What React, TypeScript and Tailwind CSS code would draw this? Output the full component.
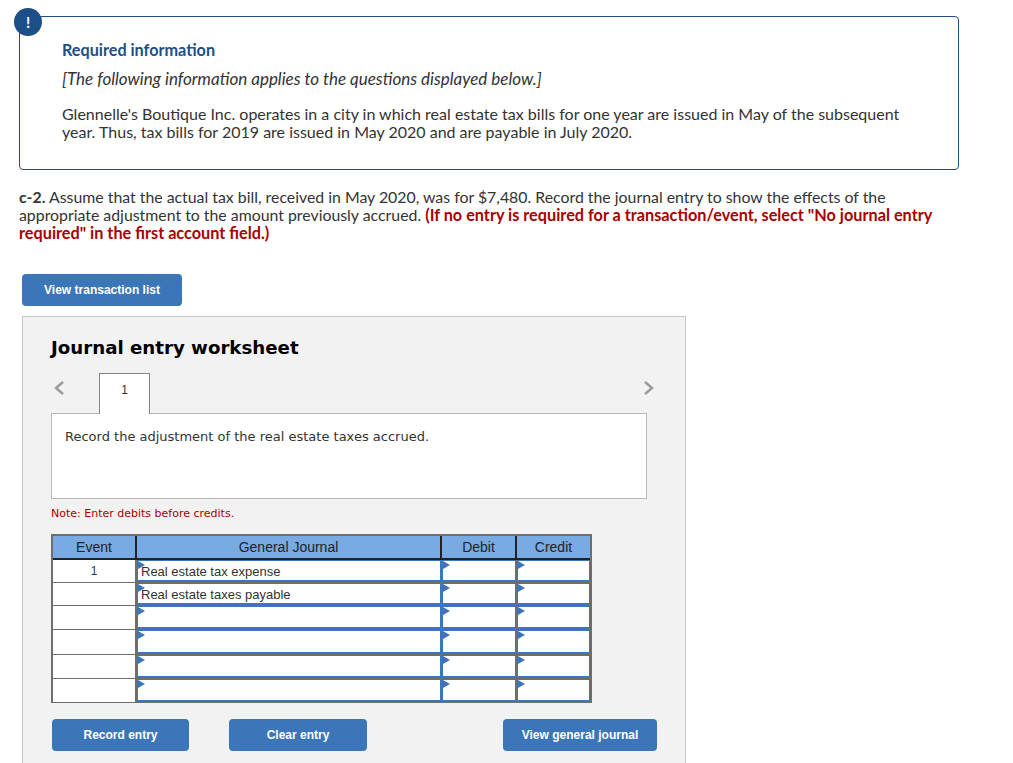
const body = "font-['Lato','Open_Sans',sans-serif]";
const arial = "font-['Liberation_Sans',Arial,sans-serif]";
const dejavu = "font-['DejaVu_Sans',Verdana,sans-serif]";

function Flag() {
  return (
    <svg className="absolute left-0 top-0" width="7" height="8" viewBox="0 0 7 8">
      <path d="M0 0L7 4L0 8Z" fill="#3b76b8" />
    </svg>
  );
}

function EntryCell({ width, text }: { width: string; text?: string }) {
  return (
    <div className={`${width} h-full shrink-0 border-r border-[#6e6e6e] last:border-r-0`}>
      <div className={`relative h-full border border-b-2 border-[#3b76b8] bg-white pl-[3px] text-[13px] leading-[21px] text-[#333] ${arial}`}>
        <Flag />
        {text}
      </div>
    </div>
  );
}

function Row({ height, event, account }: { height: string; event?: string; account?: string }) {
  return (
    <div className={`flex ${height} border-b border-[#6e6e6e]`}>
      <div className={`w-[84px] shrink-0 border-r-2 border-[#6e6e6e] bg-white text-center text-[12px] leading-[23px] text-[#333] ${arial}`}>
        {event}
      </div>
      <EntryCell width="w-[305px]" text={account} />
      <EntryCell width="w-[75px]" />
      <EntryCell width="w-[73px]" />
    </div>
  );
}

function ActionButton({ label, width }: { label: string; width: string }) {
  return (
    <button className={`${width} h-8 rounded-sm bg-[#3b76b8] text-[12px] font-bold text-white ${arial}`}>
      {label}
    </button>
  );
}

export default function App() {
  return (
    <div className={`h-[763px] w-[1013px] overflow-hidden bg-white pl-[19px] pt-4 ${body}`}>
      <div className="relative h-[154px] w-[940px] rounded border border-[#1c4f87] pl-[42px] pt-[23px] text-[16px] text-[#333]">
        <div className="absolute -left-[6px] -top-[9px] flex h-7 w-7 items-center justify-center rounded-full bg-[#1c4f87] text-[15px] font-bold text-white">
          !
        </div>
        <h2 className="text-[16.2px] leading-[20px] font-bold text-[#1c4f87]">Required information</h2>
        <p className="mt-[9px] text-[17px] leading-[20px] italic">[The following information applies to the questions displayed below.]</p>
        <p className="mt-[16px] w-[860px] leading-[18px]">
          Glennelle's Boutique Inc. operates in a city in which real estate tax bills for one year are issued in May of the subsequent year. Thus, tax bills for 2019 are issued in May 2020 and are payable in July 2020.
        </p>
      </div>

      <p className="mt-[18px] w-[920px] text-[15.85px] leading-[18px] text-[#333]">
        <b>c-2.</b> Assume that the actual tax bill, received in May 2020, was for $7,480. Record the journal entry to show the effects of the appropriate adjustment to the amount previously accrued.{" "}
        <b className="text-[16.25px] text-[#a80000]">(If no entry is required for a transaction/event, select "No journal entry required" in the first account field.)</b>
      </p>

      <button className={`ml-[3px] mt-[32px] block h-8 w-40 rounded-sm bg-[#3b76b8] text-[12px] font-bold text-white ${arial}`}>
        View transaction list
      </button>

      <div className="ml-[3px] mt-[10px] h-[460px] w-[664px] border border-[#c8c8c8] bg-[#f2f2f2] pl-7 pt-[19px]">
        <h1 className={`text-[18.2px] leading-6 font-bold text-black ${dejavu}`}>Journal entry worksheet</h1>

        <div className="relative z-10 mt-[13px] flex h-[40px] w-[596px] items-start justify-between">
          <svg className="mt-[7px] ml-[2px]" width="12" height="16" viewBox="0 0 12 16" fill="none" stroke="#9a9a9a" strokeWidth="2.4">
            <path d="M10 2L3 8L10 14" />
          </svg>
          <div className={`absolute left-[48px] top-0 h-[41px] w-[51px] border-x border-t border-[#858585] bg-white pt-[7px] text-center text-[12px] text-[#333] ${arial}`}>
            1
          </div>
          <svg className="mt-[7px] mr-[-8px]" width="12" height="16" viewBox="0 0 12 16" fill="none" stroke="#9a9a9a" strokeWidth="2.4">
            <path d="M2 2L9 8L2 14" />
          </svg>
        </div>

        <div className={`h-[86px] w-[596px] border border-[#b9b9b9] bg-white pl-[13px] pt-[14px] text-[13px] leading-[17px] text-[#333] ${dejavu}`}>
          Record the adjustment of the real estate taxes accrued.
        </div>

        <p className={`mt-[8px] text-[11px] leading-[14px] text-[#a80000] ${dejavu}`}>Note: Enter debits before credits.</p>

        <div className="mt-[13px] w-[541px] border-x-2 border-t-2 border-[#6e6e6e]">
          <div className={`flex h-[24px] border-b-2 border-[#222] bg-[#78abe3] text-center text-[14px] leading-[22px] text-[#222] ${arial}`}>
            <div className="w-[84px] shrink-0 border-r-2 border-[#222]">Event</div>
            <div className="w-[305px] shrink-0 border-r-2 border-[#222]">General Journal</div>
            <div className="w-[75px] shrink-0 border-r-2 border-[#222]">Debit</div>
            <div className="w-[73px] shrink-0">Credit</div>
          </div>
          <Row height="h-[23px]" event="1" account="Real estate tax expense" />
          <Row height="h-[23px]" account="Real estate taxes payable" />
          <Row height="h-[24px]" />
          <Row height="h-[25px]" />
          <Row height="h-[24px]" />
          <Row height="h-[24px]" />
        </div>

        <div className="mt-[16px] flex w-[606px] pl-px">
          <ActionButton label="Record entry" width="w-[137px]" />
          <div className="ml-10">
            <ActionButton label="Clear entry" width="w-[138px]" />
          </div>
          <div className="ml-auto">
            <ActionButton label="View general journal" width="w-[154px]" />
          </div>
        </div>
      </div>
    </div>
  );
}
